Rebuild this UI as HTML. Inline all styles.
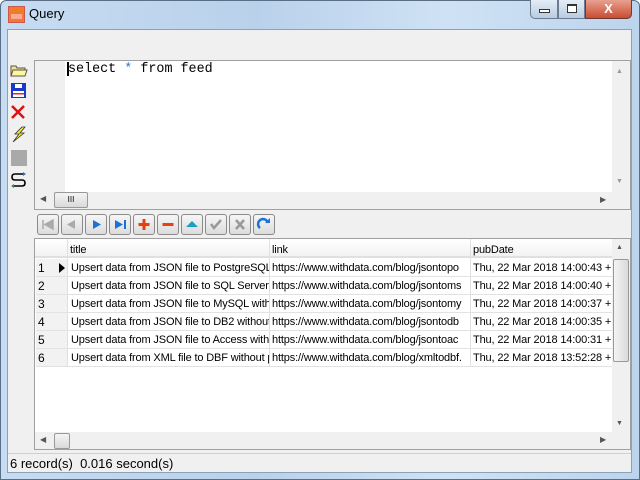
<!DOCTYPE html>
<html><head><style>
*{box-sizing:border-box;margin:0;padding:0}
body{width:640px;height:480px;overflow:hidden;background:#fff;font-family:"Liberation Sans",sans-serif;font-size:12px;position:relative}
.abs{position:absolute}
#frame{left:0;top:0;width:640px;height:480px;background:linear-gradient(90deg,#c6dcf2,#b9d1ea 40%,#cfe2f5 70%,#bcd4ec);border:1px solid #5a6e86;border-radius:6px 6px 0 0}
#client{left:7px;top:29px;width:625px;height:444px;background:#f0f0f0;border:1px solid #8ca0b6}
.btn{position:absolute;width:22px;height:21px;border:1px solid #8a8a8a;border-radius:3px;background:linear-gradient(#f6f6f6,#dcdcdc)}
.row{position:absolute;left:36px;width:576px;height:18px;border-bottom:1px solid #e2e2e2}
.c{position:absolute;top:0;height:18px;line-height:18px;white-space:nowrap;overflow:hidden;color:#000;font-size:11px;letter-spacing:-0.15px}
</style></head><body>
<div id="frame" class="abs"></div>
<div class="abs" style="left:8px;top:6px;width:17px;height:17px;background:#f07c2a;border:1px solid #c55"></div>
<div class="abs" style="left:11px;top:14px;width:11px;height:5px;background:#fbc;opacity:.7"></div>
<div class="abs" style="left:29px;top:6px;font-size:13px;color:#000">Query</div>
<div class="abs" style="left:530px;top:0;width:28px;height:19px;border:1px solid #6b7c92;border-top:none;border-radius:0 0 0 5px;background:linear-gradient(#e4edf7,#b9cbe0)"><div class="abs" style="left:8px;top:9px;width:11px;height:4px;background:#fff;border:1px solid #333"></div></div>
<div class="abs" style="left:558px;top:0;width:27px;height:19px;border:1px solid #6b7c92;border-top:none;background:linear-gradient(#e4edf7,#b9cbe0)"><div class="abs" style="left:8px;top:4px;width:10px;height:9px;border:1px solid #333;border-top-width:2px;background:#fff"></div></div>
<div class="abs" style="left:585px;top:0;width:47px;height:19px;border:1px solid #6b3a30;border-top:none;border-radius:0 0 5px 0;background:linear-gradient(#e9a08f,#c94d32);color:#fff;font-weight:bold;font-size:13px;text-align:center;line-height:17px">X</div>
<div id="client" class="abs"></div>
<svg class="abs" style="left:10px;top:62px" width="18" height="128">
<path d="M1 4h5l1 2h8v8H1z" fill="#f5e18a" stroke="#555"/><path d="M3 8h14l-2 6H1z" fill="#fff59a" stroke="#555"/>
<rect x="1" y="21" width="15" height="15" fill="#1d38c8"/><rect x="3" y="29" width="11" height="6" fill="#fff"/><rect x="3" y="31" width="11" height="1.5" fill="#e22"/><rect x="5" y="22" width="7" height="4" fill="#fff"/>
<path d="M2 44l12 12M14 44L2 56" stroke="#e01010" stroke-width="2.5"/>
<path d="M12 65l-7 7h4l-6 8 11-9h-4l5-6z" fill="#f6ec2a" stroke="#333" stroke-width=".8"/>
<rect x="1" y="88" width="16" height="16" fill="#a9a9a9"/>
<path d="M14 112H5q-3 0-3 3t3 3h7q3 0 3 3t-3 3H3" fill="none" stroke="#000" stroke-width="1.6"/><path d="M13 110l3 2-3 2z" fill="#2a6ad8"/><path d="M4 122l-3 2 3 2z" fill="#2a9a2a"/>
</svg>
<div class="abs" style="left:34px;top:60px;width:597px;height:150px;border:1px solid #a0a0a0;background:#fff"></div>
<div class="abs" style="left:35px;top:61px;width:30px;height:131px;background:#f0f0f0"></div>
<div class="abs" style="left:67px;top:62px;width:2px;height:14px;background:#000"></div>
<div class="abs" style="left:68px;top:62px;font-family:'Liberation Mono',monospace;font-size:13.4px;color:#000">select <span style="color:#3a78c8">*</span> from feed</div>
<div class="abs" style="left:612px;top:61px;width:18px;height:148px;background:#f0f0f0"></div>
<div class="abs" style="left:616px;top:68px;font-size:7px;color:#999">▲</div>
<div class="abs" style="left:616px;top:178px;font-size:7px;color:#999">▼</div>
<div class="abs" style="left:35px;top:192px;width:577px;height:17px;background:#f0f0f0"></div>
<div class="abs" style="left:40px;top:194px;font-size:8px;color:#555">◀</div>
<div class="abs" style="left:54px;top:192px;width:34px;height:16px;border:1px solid #999;border-radius:2px;background:linear-gradient(#f4f4f4,#dadada);font-size:8px;text-align:center;line-height:14px">III</div>
<div class="abs" style="left:600px;top:195px;font-size:8px;color:#555">▶</div>
<div class="btn" style="left:37px;top:214px"><svg width="20" height="19"><path d="M5 5v9M15 5l-8 4.5 8 4.5z" stroke="#aaa" fill="#aaa" stroke-width="1.5"/></svg></div>
<div class="btn" style="left:61px;top:214px"><svg width="20" height="19"><path d="M13 5l-8 4.5 8 4.5z" fill="#aaa"/></svg></div>
<div class="btn" style="left:85px;top:214px"><svg width="20" height="19"><path d="M7 5l8 4.5-8 4.5z" fill="#1b72d8"/></svg></div>
<div class="btn" style="left:109px;top:214px"><svg width="20" height="19"><path d="M5 5l8 4.5-8 4.5z" fill="#1b72d8"/><path d="M15 5v9" stroke="#1b72d8" stroke-width="2"/></svg></div>
<div class="btn" style="left:133px;top:214px"><svg width="20" height="19"><path d="M10 4v11M4.5 9.5h11" stroke="#e84010" stroke-width="3"/></svg></div>
<div class="btn" style="left:157px;top:214px"><svg width="20" height="19"><path d="M4.5 9.5h11" stroke="#e84010" stroke-width="3"/></svg></div>
<div class="btn" style="left:181px;top:214px"><svg width="20" height="19"><path d="M4 12l6-6 6 6z" fill="#1aa0c0"/></svg></div>
<div class="btn" style="left:205px;top:214px"><svg width="20" height="19"><path d="M5 9l3 4 7-8" stroke="#999" stroke-width="2.5" fill="none"/></svg></div>
<div class="btn" style="left:229px;top:214px"><svg width="20" height="19"><path d="M6 5l8 9M14 5l-8 9" stroke="#999" stroke-width="2.5"/></svg></div>
<div class="btn" style="left:253px;top:214px"><svg width="20" height="19"><path d="M6 13a5 5 0 1 1 8-5" stroke="#1b72d8" stroke-width="2.5" fill="none"/><path d="M11 8h5V3z" fill="#1b72d8"/></svg></div>
<div class="abs" style="left:34px;top:238px;width:597px;height:212px;border:1px solid #a0a0a0;background:#fff"></div>
<div class="abs" style="left:35px;top:239px;width:577px;height:19px;background:linear-gradient(#fff,#f2f2f2);border-bottom:2px solid #e0e0e0"></div>
<div class="abs" style="left:67px;top:239px;width:1px;height:127px;background:#e0e0e0"></div>
<div class="c" style="left:70px;top:241px">title</div>
<div class="abs" style="left:269px;top:239px;width:1px;height:127px;background:#e0e0e0"></div>
<div class="c" style="left:272px;top:241px">link</div>
<div class="abs" style="left:470px;top:239px;width:1px;height:127px;background:#e0e0e0"></div>
<div class="c" style="left:473px;top:241px">pubDate</div>
<div class="abs" style="left:36px;top:259px;width:31px;height:108px;background:#f2f2f2"></div>
<div class="row" style="top:259px"><div class="c" style="left:2px;width:20px;font-size:12px">1</div><div class="abs" style="left:23px;top:4px;width:0;height:0;border-left:6px solid #000;border-top:5px solid transparent;border-bottom:5px solid transparent"></div><div class="c" style="left:35px;width:198px">Upsert data from JSON file to PostgreSQL</div><div class="c" style="left:236px;width:198px">https://www.withdata.com/blog/jsontopo</div><div class="c" style="left:437px;width:139px">Thu, 22 Mar 2018 14:00:43 +</div></div>
<div class="row" style="top:277px"><div class="c" style="left:2px;width:20px;font-size:12px">2</div><div class="c" style="left:35px;width:198px">Upsert data from JSON file to SQL Server</div><div class="c" style="left:236px;width:198px">https://www.withdata.com/blog/jsontoms</div><div class="c" style="left:437px;width:139px">Thu, 22 Mar 2018 14:00:40 +</div></div>
<div class="row" style="top:295px"><div class="c" style="left:2px;width:20px;font-size:12px">3</div><div class="c" style="left:35px;width:198px">Upsert data from JSON file to MySQL with</div><div class="c" style="left:236px;width:198px">https://www.withdata.com/blog/jsontomy</div><div class="c" style="left:437px;width:139px">Thu, 22 Mar 2018 14:00:37 +</div></div>
<div class="row" style="top:313px"><div class="c" style="left:2px;width:20px;font-size:12px">4</div><div class="c" style="left:35px;width:198px">Upsert data from JSON file to DB2 without</div><div class="c" style="left:236px;width:198px">https://www.withdata.com/blog/jsontodb</div><div class="c" style="left:437px;width:139px">Thu, 22 Mar 2018 14:00:35 +</div></div>
<div class="row" style="top:331px"><div class="c" style="left:2px;width:20px;font-size:12px">5</div><div class="c" style="left:35px;width:198px">Upsert data from JSON file to Access with</div><div class="c" style="left:236px;width:198px">https://www.withdata.com/blog/jsontoac</div><div class="c" style="left:437px;width:139px">Thu, 22 Mar 2018 14:00:31 +</div></div>
<div class="row" style="top:349px"><div class="c" style="left:2px;width:20px;font-size:12px">6</div><div class="c" style="left:35px;width:198px">Upsert data from XML file to DBF without p</div><div class="c" style="left:236px;width:198px">https://www.withdata.com/blog/xmltodbf.</div><div class="c" style="left:437px;width:139px">Thu, 22 Mar 2018 13:52:28 +</div></div>
<div class="abs" style="left:612px;top:239px;width:18px;height:210px;background:#f0f0f0"></div>
<div class="abs" style="left:616px;top:244px;font-size:7px;color:#555">▲</div>
<div class="abs" style="left:613px;top:259px;width:16px;height:103px;border:1px solid #999;border-radius:2px;background:linear-gradient(90deg,#f4f4f4,#dadada)"></div>
<div class="abs" style="left:616px;top:420px;font-size:7px;color:#555">▼</div>
<div class="abs" style="left:35px;top:432px;width:577px;height:17px;background:#f0f0f0"></div>
<div class="abs" style="left:40px;top:435px;font-size:8px;color:#555">◀</div>
<div class="abs" style="left:54px;top:433px;width:16px;height:16px;border:1px solid #999;border-radius:2px;background:linear-gradient(#f4f4f4,#dadada)"></div>
<div class="abs" style="left:600px;top:435px;font-size:8px;color:#555">▶</div>
<div class="abs" style="left:8px;top:453px;width:623px;height:19px;background:#f0f0f0;border-top:1px solid #d0d0d0"></div>
<div class="abs" style="left:10px;top:456px;font-size:13px">6 record(s)&nbsp;&nbsp;0.016 second(s)</div>
</body></html>
